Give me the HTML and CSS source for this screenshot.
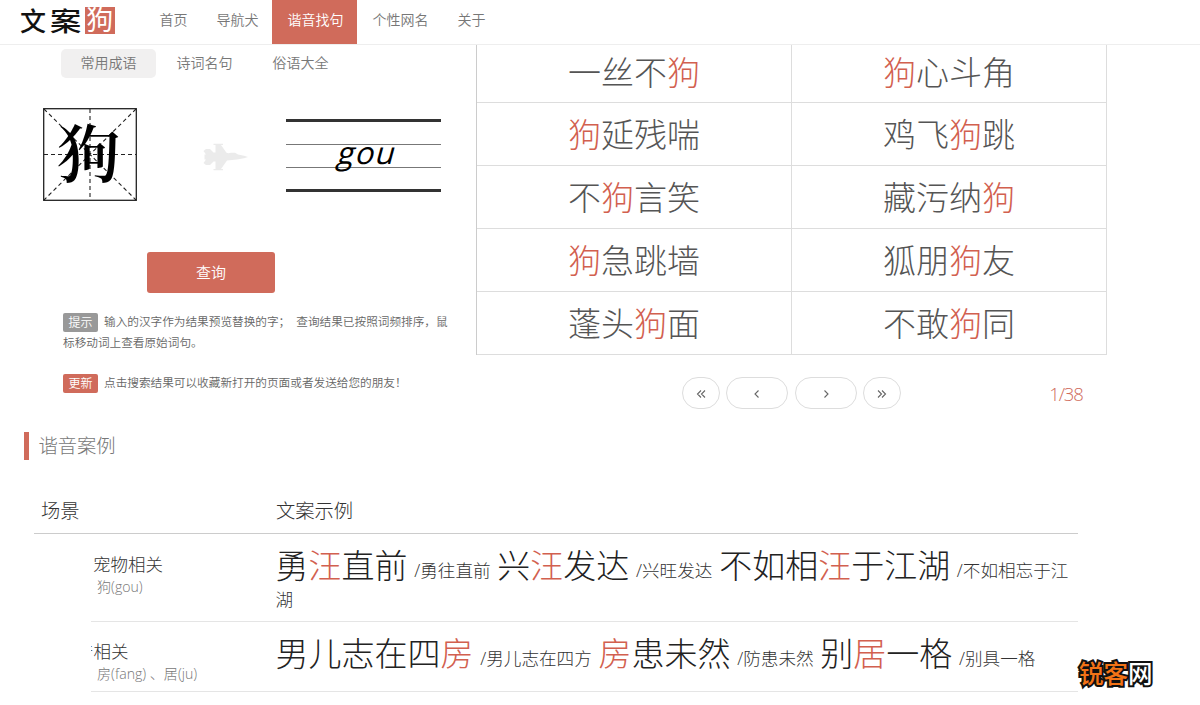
FILE: index.html
```
<!DOCTYPE html>
<html lang="zh-CN">
<head>
<meta charset="utf-8">
<title>文案狗</title>
<link rel="stylesheet" href="styles.css">
</head>
<body>
<header class="header">
  <a class="logo"><span class="logo-a">文</span><span class="logo-b">案</span><span class="logo-seal">狗</span></a>
  <nav class="nav">
    <a>首页</a><a>导航犬</a><a class="active">谐音找句</a><a>个性网名</a><a>关于</a>
  </nav>
</header>
<main>
  <div class="top">
    <section class="search">
      <div class="tabs"><a class="on">常用成语</a><a>诗词名句</a><a>俗语大全</a></div>
      <div class="stage">
        <div class="grid-char">
          <svg class="grid-lines" viewBox="0 0 94 93"><g fill="none" stroke="#222"><rect x=".7" y=".7" width="92.6" height="91.6" stroke-width="1.3"/><path d="M1 1L93 92M93 1L1 92M47 1V92M1 46.5H93" stroke-width="1.1" stroke-dasharray="4 3"/></g></svg>
          <span class="grid-glyph">狗</span>
        </div>
        <svg class="plane" viewBox="0 0 45 28"><path fill="#ebebeb" d="M10.500 .8H20V2H18L23.500 9.800 25.500 10.200 28 9.800H32L35 11.500 41 12.700 45 14 41 15.300 34 16.500 24 17.500 18 26H20V27.200H10.500V26H12.500V18.500H10.500L7 22H3L.5 20 3 16.500H1.500V11.500H3L.5 8 3 6H7L10.500 9.500H12.500V2H10.500Z"/></svg>
        <div class="pinyin"><div class="mid"><span>gou</span></div></div>
      </div>
      <button class="query">查询</button>
      <div class="notes">
        <p><b class="tag">提示</b>输入的汉字作为结果预览替换的字；&nbsp; 查询结果已按照词频排序，鼠标移动词上查看原始词句。</p>
        <p><b class="tag red">更新</b>点击搜索结果可以收藏新打开的页面或者发送给您的朋友！</p>
      </div>
    </section>
    <section class="results">
      <div class="words">
        <a>一丝不<i>狗</i></a><a><i>狗</i>心斗角</a>
        <a><i>狗</i>延残喘</a><a>鸡飞<i>狗</i>跳</a>
        <a>不<i>狗</i>言笑</a><a>藏污纳<i>狗</i></a>
        <a><i>狗</i>急跳墙</a><a>狐朋<i>狗</i>友</a>
        <a>蓬头<i>狗</i>面</a><a>不敢<i>狗</i>同</a>
      </div>
      <div class="pager">
        <a><svg viewBox="0 0 10 10"><path d="M5 1.500L1.500 5 5 8.500M9 1.500L5.500 5 9 8.500"/></svg></a>
        <a class="wide"><svg viewBox="0 0 10 10"><path d="M6.500 1.500L3 5l3.500 3.500"/></svg></a>
        <a class="wide"><svg viewBox="0 0 10 10"><path d="M3.500 1.500L7 5 3.500 8.500"/></svg></a>
        <a><svg viewBox="0 0 10 10"><path d="M1 1.500L4.500 5 1 8.500M5 1.500L8.500 5 5 8.500"/></svg></a>
        <span class="count">1/38</span>
      </div>
    </section>
  </div>
  <section class="cases">
    <h2>谐音案例</h2>
    <div class="case-head"><span>场景</span><span>文案示例</span></div>
    <div class="case">
      <div class="scene"><div class="name">宠物相关</div><div class="sub">狗(gou)</div></div>
      <div class="examples"><big>勇<i>汪</i>直前</big> <small>/勇往直前</small> <big>兴<i>汪</i>发达</big> <small>/兴旺发达</small> <big>不如相<i>汪</i>于江湖</big> <small>/不如相忘于江湖</small></div>
    </div>
    <div class="case second">
      <div class="scene"><div class="name clipped">产相关</div><div class="sub">房(fang) 、居(ju)</div></div>
      <div class="examples"><big>男儿志在四<i>房</i></big> <small>/男儿志在四方</small> <big><i>房</i>患未然</big> <small>/防患未然</small> <big>别<i>居</i>一格</big> <small>/别具一格</small></div>
    </div>
  </section>
</main>
<div class="watermark"><span>锐客</span>网</div>
</body>
</html>
```
FILE: styles.css
```
* { box-sizing: border-box; }
body {
  margin: 0;
  width: 1200px;
  height: 705px;
  overflow: hidden;
  position: relative;
  background: #fff;
  color: #333;
  font-family: "Open Sans", "Noto Sans CJK SC", sans-serif;
  font-weight: 300;
}
i { font-style: normal; color: #d2604f; }
p, h2 { margin: 0; font-weight: inherit; }

.header { height: 45px; border-bottom: 1px solid #eee; display: flex; }
.logo { width: 144px; padding: 7px 0 0 20px; display: flex; color: #111; font-family: "Noto Sans CJK SC", sans-serif; font-weight: 500; line-height: 25px; font-size: 26px; }
.logo-a { width: 30px; }
.logo-b { width: 35px; transform: scaleX(1.2); transform-origin: left; }
.logo-seal { width: 29.5px; height: 27px; background: #d06b5b; color: #fff; font-size: 27px; font-weight: 400; text-align: center; line-height: 24px; }
.nav { display: flex; }
.nav a { height: 44px; padding: 0 13.5px 0 15.5px; line-height: 39px; font-size: 14px; font-weight: 350; color: #777; }
.nav .active { background: #d06b5b; color: #fff; }

.top { display: flex; height: 375px; }
.search { width: 476px; padding-top: 4px; }
.tabs { display: flex; gap: 1px; margin-left: 61px; }
.tabs a { width: 95px; height: 29px; line-height: 27px; text-align: center; border-radius: 5px; font-size: 14px; font-weight: 350; color: #777; }
.tabs .on { background: #f1f0f0; }
.stage { display: flex; margin: 30px 0 0 43px; height: 93px; }
.grid-char { position: relative; width: 94px; height: 93px; }
.grid-lines { display: block; width: 94px; height: 93px; }
.grid-glyph { position: absolute; inset: 0 3px 0 0; text-align: center; color: #000; font-family: "Noto Serif CJK SC", "Noto Sans CJK SC", sans-serif; font-size: 63px; font-weight: 600; line-height: 83px; }
.plane { width: 45px; height: 28px; margin: 35px 38px 0 66px; }
.pinyin { width: 155px; height: 73px; margin-top: 11px; border-top: 3px solid #333; border-bottom: 3px solid #333; padding-top: 22px; }
.mid { height: 24px; border-top: 1px solid #777; border-bottom: 1px solid #777; text-align: center; }
.mid span { display: inline-block; font-size: 31px; font-weight: 400; line-height: 14px; color: #000; letter-spacing: 1.3px; transform: translateX(5px) skewX(-15deg); }
.query { display: block; margin: 51px 0 0 147px; width: 128px; height: 41px; border: 0; border-radius: 3px; padding: 0 0 2px; background: #d06b5b; color: #fff; font: 350 15px "Noto Sans CJK SC", sans-serif; }
.notes { margin: 19px 0 0 63px; width: 386px; font-size: 11.65px; font-weight: 350; line-height: 20.5px; color: #666; }
.notes p + p { margin-top: 19.5px; }
.tag { display: inline-block; width: 35px; height: 19px; margin-right: 6px; border-radius: 2px; background: #999; color: #fff; font-size: 12px; font-weight: 350; line-height: 19px; text-align: center; vertical-align: middle; }
.red { background: #d06b5b; }

.words { display: grid; grid-template-columns: 315px 315px; grid-template-rows: 58px 63px 63px 63px 63px; width: 631px; border-left: 1px solid #ccc; }
.words a { border-right: 1px solid #ddd; border-bottom: 1px solid #ddd; text-align: center; font-size: 33px; line-height: 63px; color: #555; }
.words a:nth-child(-n+2) { line-height: 55px; }
.pager { display: flex; gap: 6.2px; margin: 22px 0 0 206px; }
.pager a { width: 38px; height: 32px; border: 1px solid #ddd; border-radius: 16px; display: flex; align-items: center; justify-content: center; }
.pager .wide { width: 62.3px; }
.pager svg { width: 10px; height: 10px; margin-top: 2px; fill: none; stroke: #666; stroke-width: 1.1; }
.count { margin-left: 142px; font-size: 18.5px; letter-spacing: -1.2px; line-height: 33px; color: #d06b5b; }

.cases h2 { margin: 12px 0 0 24px; height: 28px; border-left: 5px solid #d06b5b; padding-left: 9.5px; font-size: 19.3px; line-height: 27px; color: #777; }
.case-head { display: grid; grid-template-columns: 235px 1fr; margin: 28px 0 0 34px; width: 1044px; height: 46px; border-bottom: 1px solid #ccc; padding-left: 7px; font-size: 19.3px; line-height: 46px; }
.case { display: grid; grid-template-columns: 184.5px 796px; margin-left: 91px; width: 987px; height: 88px; border-bottom: 1px solid #e5e5e5; }
.second { height: 70px; }
.scene { padding-top: 18px; overflow: hidden; }
.second .scene { padding-top: 17px; }
.name { padding-left: 2px; font-size: 17.5px; line-height: 24px; }
.clipped { margin-left: -17px; }
.sub { padding-left: 6px; font-size: 14.1px; line-height: 21px; color: #777; }
.examples { font-size: 17.4px; padding-top: 8px; line-height: 21px; word-spacing: 2.2px; }
.examples big { font-size: 33px; line-height: 48px; color: #222; }
.examples small { font-size: 17.6px; position: relative; top: -1px; }
.watermark { position: absolute; left: 1079px; top: 659px; font: 500 24.5px/28px "Noto Sans CJK SC", sans-serif; color: #fff; -webkit-text-stroke: 4px #111; paint-order: stroke fill; }
.watermark span { color: #f37316; }
```
